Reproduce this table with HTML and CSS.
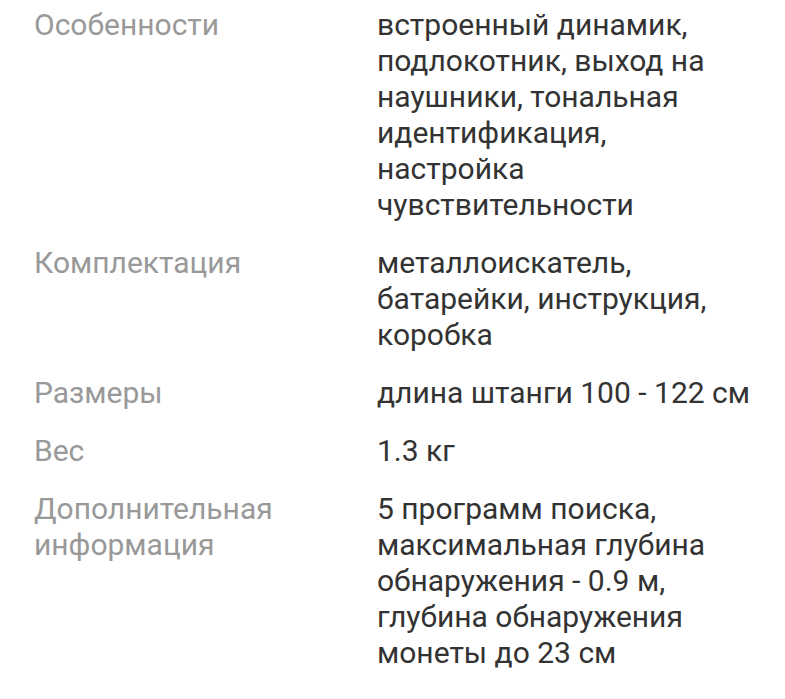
FILE: index.html
```html
<!DOCTYPE html>
<html lang="ru">
<head>
<meta charset="utf-8">
<link rel="stylesheet" href="styles.css">
</head>
<body>
<dl class="specs">
  <div class="row">
    <dt class="label">Особенности</dt>
    <dd class="value">встроенный динамик, подлокотник, выход на наушники, тональная идентификация, настройка чувствительности</dd>
  </div>
  <div class="row">
    <dt class="label">Комплектация</dt>
    <dd class="value">металлоискатель, батарейки, инструкция, коробка</dd>
  </div>
  <div class="row">
    <dt class="label">Размеры</dt>
    <dd class="value">длина штанги 100 - 122 см</dd>
  </div>
  <div class="row">
    <dt class="label">Вес</dt>
    <dd class="value">1.3 кг</dd>
  </div>
  <div class="row">
    <dt class="label">Дополнительная информация</dt>
    <dd class="value">5 программ поиска, максимальная глубина обнаружения - 0.9 м, глубина обнаружения монеты до 23 см</dd>
  </div>
</dl>
</body>
</html>
```
FILE: styles.css
```css
html, body {
  margin: 0;
  padding: 0;
  background: #ffffff;
}
body {
  font-family: Roboto, "Noto Sans", sans-serif;
  font-size: 30px;
  line-height: 36px;
}
.specs {
  margin: 0;
  padding: 7px 10px 0 34px;
  display: flex;
  flex-direction: column;
  gap: 22px;
}
.row {
  display: grid;
  grid-template-columns: 343px 1fr;
}
.label {
  color: #999999;
  width: 260px;
}
.value {
  margin: 0;
  color: #333333;
  max-width: 377px;
}
```
